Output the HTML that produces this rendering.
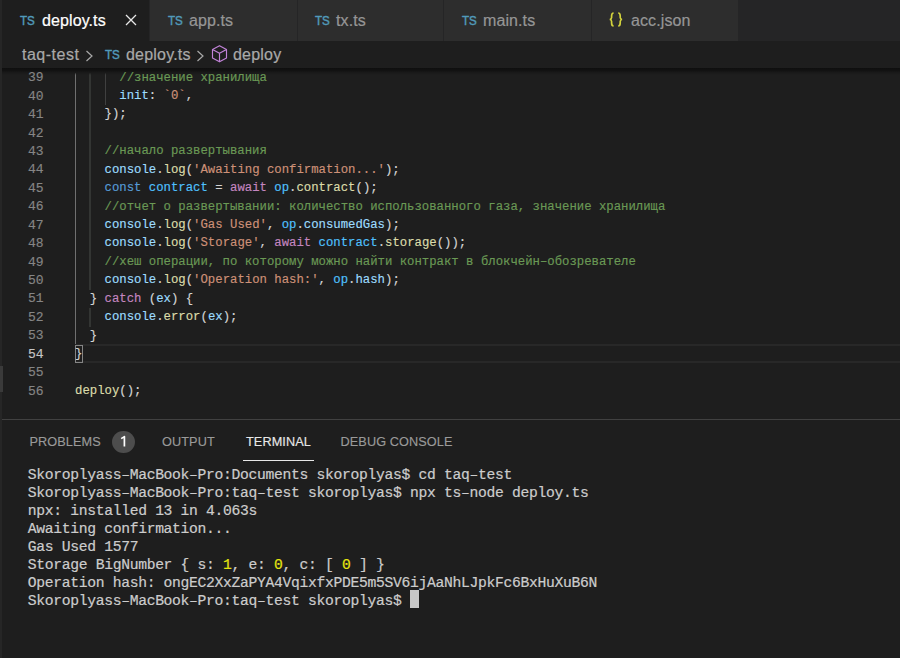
<!DOCTYPE html>
<html><head><meta charset="utf-8">
<style>
*{margin:0;padding:0;box-sizing:border-box}
html,body{width:900px;height:658px;overflow:hidden;background:#1e1e1e}
body{position:relative;font-family:"Liberation Sans",sans-serif}
.abs{position:absolute}
#tabbar{left:0;top:0;width:900px;height:41px;background:#252526}
.tab{position:absolute;top:0;height:41px;background:#2d2d2d}
.tab.active{background:#1e1e1e}
.tab .ic{position:absolute;top:12.5px;margin-left:1px;font-weight:normal;font-size:13.2px;line-height:16px;color:#519aba;letter-spacing:0px;transform:scaleX(0.88);transform-origin:0 0;-webkit-text-stroke:0.45px currentColor}
.tab .nm{position:absolute;top:11px;font-size:16px;line-height:20px;color:#969696;letter-spacing:0.1px;white-space:pre;-webkit-text-stroke:0.2px currentColor}
.tab.active .nm{color:#ffffff}
#crumbs{left:0;top:41px;width:900px;height:27px;background:#1e1e1e}
#crumbs span{position:absolute;top:4px;font-size:16px;line-height:20px;color:#a9a9a9;letter-spacing:0.2px;white-space:pre;-webkit-text-stroke:0.2px currentColor}
.code{position:absolute;left:75px;font-family:"Liberation Mono",monospace;font-size:12.31px;line-height:18.44px;white-space:pre;color:#d4d4d4;-webkit-text-stroke:0.15px currentColor}
.ln{position:absolute;font-family:"Liberation Mono",monospace;font-size:13px;color:#858585;text-align:right;width:40px;left:3.5px;line-height:18.44px;margin-top:0.7px;-webkit-text-stroke:0.15px currentColor}
.ln.act{color:#c6c6c6}
.c{color:#6a9955}.v{color:#9cdcfe}.f{color:#dcdcaa}.s{color:#ce9178}.k{color:#569cd6}.w{color:#c586c0}.n{color:#4fc1ff}
.guide{position:absolute;width:1px;background:#404040}
#panel{left:0;top:419px;width:900px;height:239px;background:#1e1e1e;border-top:1px solid #414141}
.ptab{position:absolute;top:14.5px;font-size:12.7px;color:#9a9a9a;white-space:pre;letter-spacing:0.1px;-webkit-text-stroke:0.15px currentColor}
.term{position:absolute;left:27.7px;font-family:"Liberation Mono",monospace;font-size:14.7px;letter-spacing:-0.318px;line-height:18px;-webkit-text-stroke:0.2px currentColor;color:#cccccc;white-space:pre}
.y{color:#e5e510}
</style></head><body>
<div id="tabbar" class="abs">
  <div class="tab active" style="left:0;width:149px">
    <span class="ic" style="left:19px">TS</span><span class="nm" style="left:42px">deploy.ts</span>
    <svg class="abs" style="left:125px;top:14px" width="12" height="12" viewBox="0 0 12 12"><path d="M1 1L11 11M11 1L1 11" stroke="#e8e8e8" stroke-width="1.3"/></svg>
  </div>
  <div class="tab" style="left:150px;width:147px">
    <span class="ic" style="left:17px">TS</span><span class="nm" style="left:39px">app.ts</span>
  </div>
  <div class="tab" style="left:298px;width:145px">
    <span class="ic" style="left:16px">TS</span><span class="nm" style="left:38px">tx.ts</span>
  </div>
  <div class="tab" style="left:444px;width:147px">
    <span class="ic" style="left:17px">TS</span><span class="nm" style="left:39px">main.ts</span>
  </div>
  <div class="tab" style="left:592px;width:146px">
    <svg class="abs" style="left:17px;top:11.8px" width="14" height="15" viewBox="0 0 14 15"><path d="M4.6 1C2.8 1 2.6 2.2 2.6 4V5.6C2.6 6.6 2 7.3 0.8 7.5C2 7.7 2.6 8.4 2.6 9.4V11C2.6 12.8 2.8 14 4.6 14M9.2 1C11 1 11.2 2.2 11.2 4V5.6C11.2 6.6 11.8 7.3 13 7.5C11.8 7.7 11.2 8.4 11.2 9.4V11C11.2 12.8 11 14 9.2 14" stroke="#d2d23c" stroke-width="1.7" fill="none"/></svg><span class="nm" style="left:39px">acc.json</span>
  </div>
</div>
<div id="crumbs" class="abs">
  <span style="left:22px;letter-spacing:0.5px">taq-test</span>
  <svg class="abs" style="left:85px;top:9px" width="9" height="12" viewBox="0 0 9 12"><path d="M1.5 1L7 6L1.5 11" stroke="#a9a9a9" stroke-width="1.2" fill="none"/></svg>
  <span style="left:104.5px;top:6px;font-weight:normal;font-size:13.2px;line-height:16px;color:#519aba;letter-spacing:0px;transform:scaleX(0.88);transform-origin:0 0;-webkit-text-stroke:0.45px currentColor">TS</span>
  <span style="left:126px">deploy.ts</span>
  <svg class="abs" style="left:196px;top:9px" width="9" height="12" viewBox="0 0 9 12"><path d="M1.5 1L7 6L1.5 11" stroke="#a9a9a9" stroke-width="1.2" fill="none"/></svg>
  <svg class="abs" style="left:205px;top:1px" width="30" height="25" viewBox="0 0 30 25"><path d="M14.5 3.7L21.5 7.5V16L14.5 19.8L7.5 16V7.5Z M7.5 7.5L14.5 11.3L21.5 7.5 M14.5 11.3V19.8" stroke="#c283d9" stroke-width="1.15" fill="none" stroke-linejoin="round"/></svg>
  <span style="left:233px">deploy</span>
</div>
<div id="editor" class="abs" style="left:0;top:68px;width:900px;height:351px;overflow:hidden">
<div class="guide" style="left:75px;top:0;height:277.10px;background:#707070"></div>
<div class="guide" style="left:89px;width:2px;background:#333533;top:0;height:221.78px"></div>
<div class="guide" style="left:89px;width:2px;background:#333533;top:240.22px;height:18.44px"></div>
<div class="guide" style="left:105px;top:0;height:37.38px"></div>
<div class="abs" style="left:75px;top:276px;width:825px;height:19px;border-top:2px solid #282828;border-bottom:2px solid #282828"></div>
<div class="abs" style="left:75px;top:276.5px;width:7.5px;height:18.5px;border:1px solid #858585"></div>
<div class="abs" style="left:2px;top:0;width:898px;height:7px;background:linear-gradient(to bottom,#0f0f0f 0px,#121212 2.5px,#191919 4.5px,rgba(30,30,30,0) 7px)"></div>
<div class="ln" style="top:0.50px">39</div>
<div class="code" style="top:0.50px">      <span class="c">//значение хранилища</span></div>
<div class="ln" style="top:18.94px">40</div>
<div class="code" style="top:18.94px">      <span class="v">init</span>: <span class="s">`0`</span>,</div>
<div class="ln" style="top:37.38px">41</div>
<div class="code" style="top:37.38px">    });</div>
<div class="ln" style="top:55.82px">42</div>
<div class="ln" style="top:74.26px">43</div>
<div class="code" style="top:74.26px">    <span class="c">//начало развертывания</span></div>
<div class="ln" style="top:92.70px">44</div>
<div class="code" style="top:92.70px">    <span class="v">console</span>.<span class="f">log</span>(<span class="s">'Awaiting confirmation...'</span>);</div>
<div class="ln" style="top:111.14px">45</div>
<div class="code" style="top:111.14px">    <span class="k">const</span> <span class="n">contract</span> = <span class="w">await</span> <span class="n">op</span>.<span class="f">contract</span>();</div>
<div class="ln" style="top:129.58px">46</div>
<div class="code" style="top:129.58px">    <span class="c">//отчет о развертывании: количество использованного газа, значение хранилища</span></div>
<div class="ln" style="top:148.02px">47</div>
<div class="code" style="top:148.02px">    <span class="v">console</span>.<span class="f">log</span>(<span class="s">'Gas Used'</span>, <span class="n">op</span>.<span class="v">consumedGas</span>);</div>
<div class="ln" style="top:166.46px">48</div>
<div class="code" style="top:166.46px">    <span class="v">console</span>.<span class="f">log</span>(<span class="s">'Storage'</span>, <span class="w">await</span> <span class="n">contract</span>.<span class="f">storage</span>());</div>
<div class="ln" style="top:184.90px">49</div>
<div class="code" style="top:184.90px">    <span class="c">//хеш операции, по которому можно найти контракт в блокчейн&#x2013;обозревателе</span></div>
<div class="ln" style="top:203.34px">50</div>
<div class="code" style="top:203.34px">    <span class="v">console</span>.<span class="f">log</span>(<span class="s">'Operation hash:'</span>, <span class="n">op</span>.<span class="v">hash</span>);</div>
<div class="ln" style="top:221.78px">51</div>
<div class="code" style="top:221.78px">  } <span class="w">catch</span> (<span class="v">ex</span>) {</div>
<div class="ln" style="top:240.22px">52</div>
<div class="code" style="top:240.22px">    <span class="v">console</span>.<span class="f">error</span>(<span class="v">ex</span>);</div>
<div class="ln" style="top:258.66px">53</div>
<div class="code" style="top:258.66px">  }</div>
<div class="ln act" style="top:277.10px">54</div>
<div class="code" style="top:277.10px">}</div>
<div class="ln" style="top:295.54px">55</div>
<div class="ln" style="top:313.98px">56</div>
<div class="code" style="top:313.98px"><span class="f">deploy</span>();</div>

</div>
<div id="panel" class="abs">
  <span class="ptab" style="left:29.5px">PROBLEMS</span>
  <div class="abs" style="left:112px;top:11px;width:22.8px;height:22.3px;border-radius:50%;background:#4d4d4d"><svg class="abs" style="left:0;top:0" width="23" height="23" viewBox="0 0 23 23"><path d="M12.4 15.5V5.6L9.2 7.6" stroke="#ffffff" stroke-width="1.7" fill="none" stroke-linejoin="round"/></svg></div>
  <span class="ptab" style="left:162px">OUTPUT</span>
  <span class="ptab" style="left:246px;color:#e7e7e7">TERMINAL</span>
  <div class="abs" style="left:243px;top:40px;width:71px;height:1px;background:#e7e7e7"></div>
  <span class="ptab" style="left:340.5px">DEBUG CONSOLE</span>
<div class="term" style="top:45.5px">Skoroplyass&#x2013;MacBook&#x2013;Pro:Documents skoroplyas$ cd taq&#x2013;test</div>
<div class="term" style="top:63.5px">Skoroplyass&#x2013;MacBook&#x2013;Pro:taq&#x2013;test skoroplyas$ npx ts&#x2013;node deploy.ts</div>
<div class="term" style="top:81.5px">npx: installed 13 in 4.063s</div>
<div class="term" style="top:99.5px">Awaiting confirmation...</div>
<div class="term" style="top:117.5px">Gas Used 1577</div>
<div class="term" style="top:135.5px">Storage BigNumber { s: <span class="y">1</span>, e: <span class="y">0</span>, c: [ <span class="y">0</span> ] }</div>
<div class="term" style="top:153.5px">Operation hash: ongEC2XxZaPYA4VqixfxPDE5m5SV6ijAaNhLJpkFc6BxHuXuB6N</div>
<div class="term" style="top:171.5px">Skoroplyass&#x2013;MacBook&#x2013;Pro:taq&#x2013;test skoroplyas$ </div>
<div class="abs" style="left:410.2px;top:170px;width:8.6px;height:18px;background:#c8c8c8"></div>
</div>
<div class="abs" style="left:0;top:0;width:2px;height:658px;background:#262626"></div>
<div class="abs" style="left:0;top:366px;width:2.5px;height:26px;background:#3a3a3a"></div>
</body></html>
